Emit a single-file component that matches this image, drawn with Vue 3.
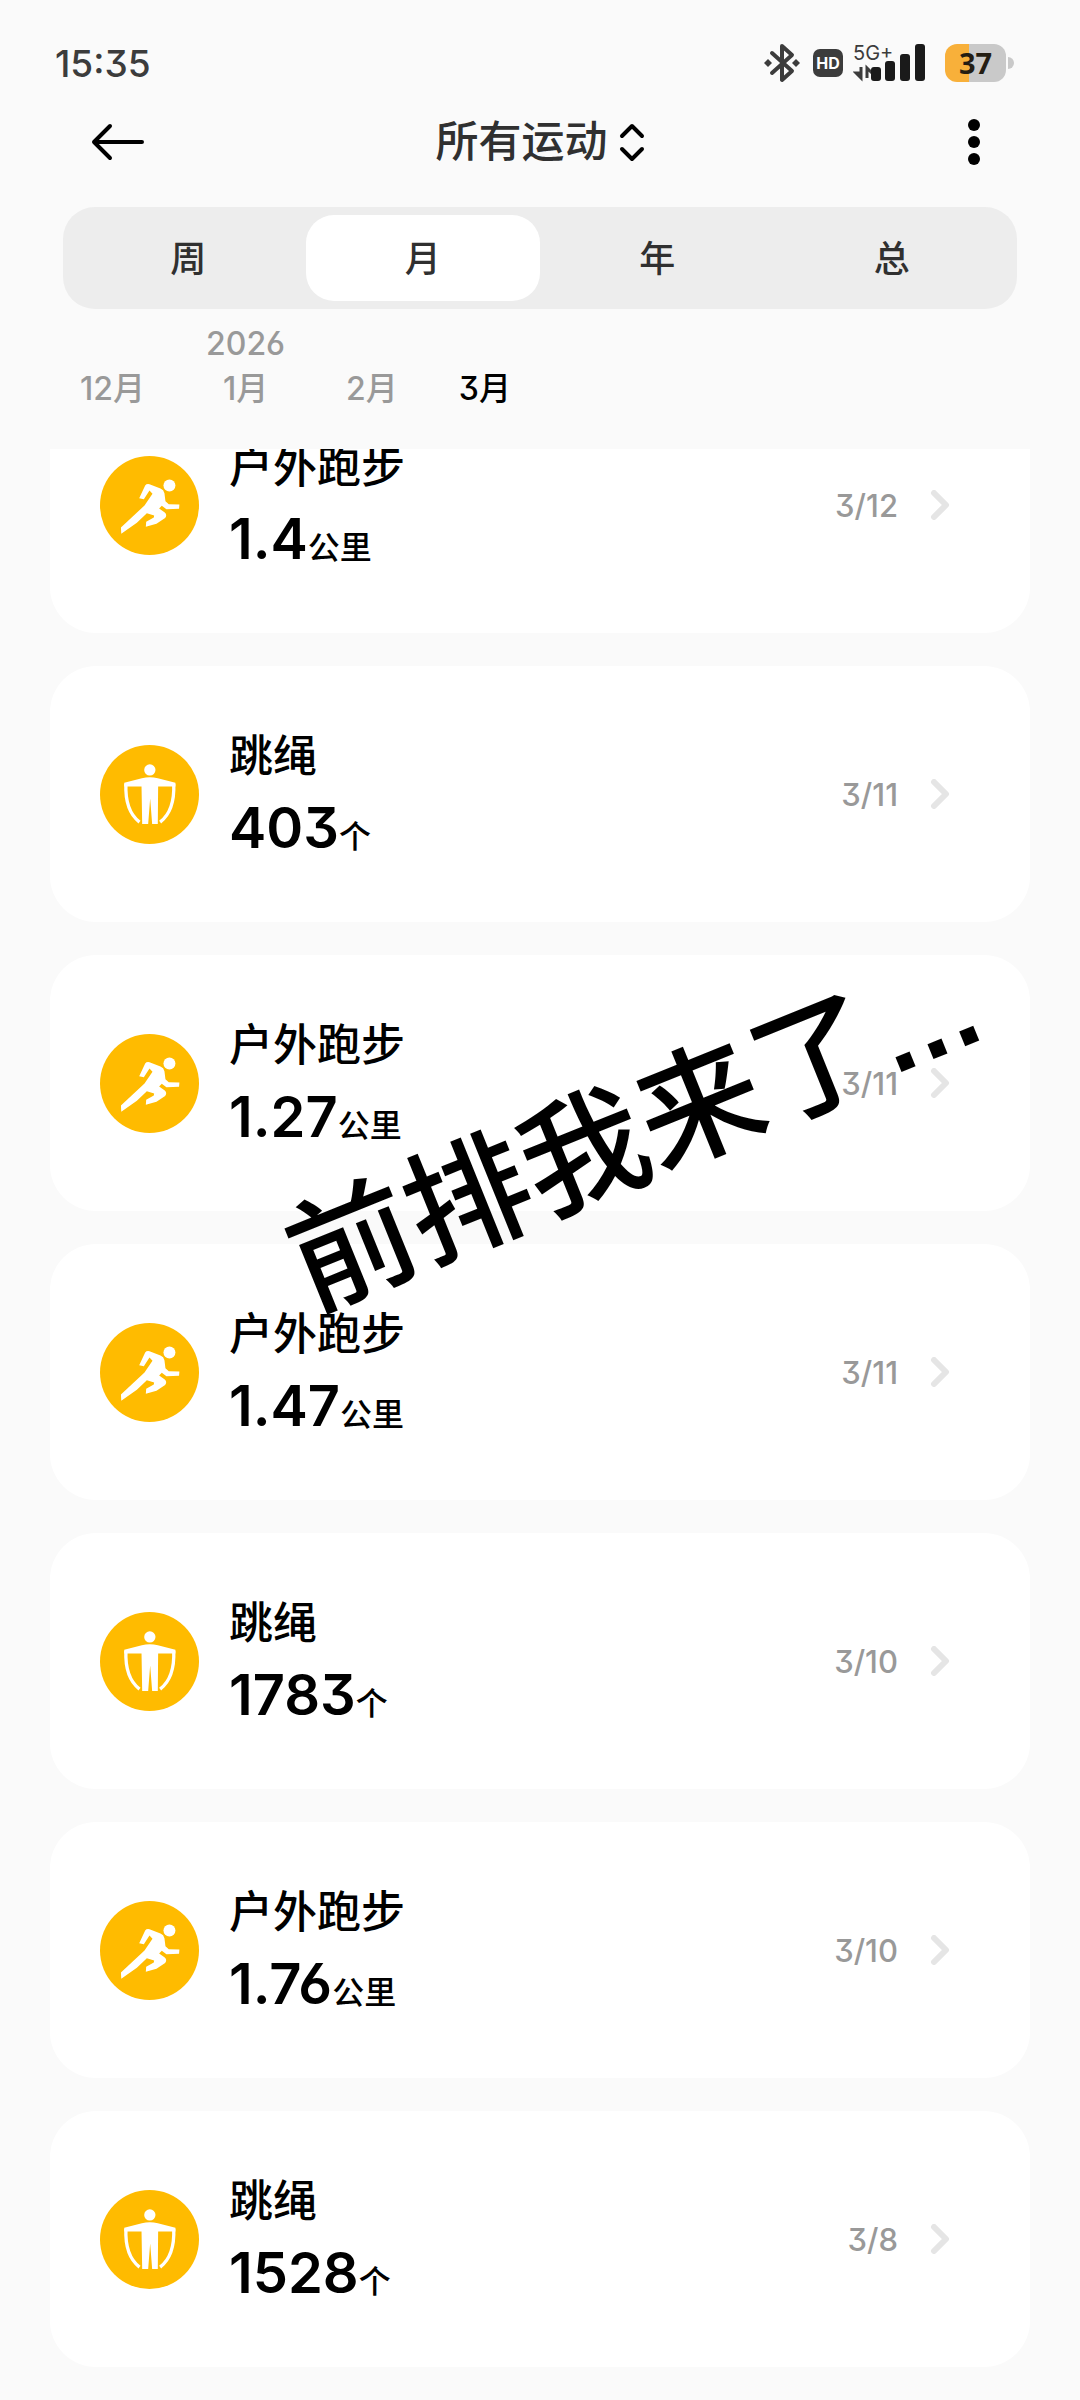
<script setup>
import { ref } from 'vue'

const ranges = ['周', '月', '年', '总']
const activeRange = ref('月')

const months = [
  { label: '12月', year: '' },
  { label: '1月', year: '2026' },
  { label: '2月', year: '' },
  { label: '3月', year: '' },
]
const activeMonth = ref('3月')

const records = [
  { id: 1, type: 'run', name: '户外跑步', value: '1.4', unit: '公里', date: '3/12' },
  { id: 2, type: 'rope', name: '跳绳', value: '403', unit: '个', date: '3/11' },
  { id: 3, type: 'run', name: '户外跑步', value: '1.27', unit: '公里', date: '3/11' },
  { id: 4, type: 'run', name: '户外跑步', value: '1.47', unit: '公里', date: '3/11' },
  { id: 5, type: 'rope', name: '跳绳', value: '1783', unit: '个', date: '3/10' },
  { id: 6, type: 'run', name: '户外跑步', value: '1.76', unit: '公里', date: '3/10' },
  { id: 7, type: 'rope', name: '跳绳', value: '1528', unit: '个', date: '3/8' },
]
</script>

<template>
  <div class="page">
    <div class="status">
      <time class="clock">15:35</time>
      <div class="indicators">
        <svg class="bluetooth" viewBox="0 0 36 40" aria-hidden="true">
          <path d="M8 10 L28 28 L18 37 V3 L28 12 L8 30" fill="none" stroke="#3c3c3c" stroke-width="4" stroke-linejoin="round" stroke-linecap="round" />
          <path d="M0 20 l4 -4 l4 4 l-4 4z M28 20 l4 -4 l4 4 l-4 4z" fill="#3c3c3c" />
        </svg>
        <span class="hd">HD</span>
        <div class="signal">
          <span class="network">5G+</span>
          <svg class="bars" viewBox="0 0 72 38" aria-hidden="true">
            <path d="M8 23 V34 L3 29 H8 M14 34 V24 L19 29" fill="none" stroke="#3c3c3c" stroke-width="3" />
            <g fill="#1a1a1a">
              <rect x="18" y="23" width="10" height="14" rx="3" />
              <rect x="32" y="17" width="10" height="20" rx="3" />
              <rect x="47" y="10" width="10" height="27" rx="3" />
              <rect x="62" y="0" width="10" height="37" rx="3" />
            </g>
          </svg>
        </div>
        <div class="battery"><span class="level">37</span></div>
      </div>
    </div>

    <header class="header">
      <button class="icon-button" type="button" aria-label="返回">
        <svg width="54" height="38" viewBox="0 0 54 38"><path d="M51 19 H3 M19 3 L3 19 L19 35" fill="none" stroke="#000" stroke-width="4" stroke-linecap="round" stroke-linejoin="round" /></svg>
      </button>
      <button class="title" type="button">
        <span class="title-text">所有运动</span>
        <svg width="26" height="40" viewBox="0 0 26 40"><path d="M3 14 L13 4 L23 14 M3 27 L13 37 L23 27" fill="none" stroke="#000" stroke-width="4" stroke-linecap="round" stroke-linejoin="round" /></svg>
      </button>
      <button class="icon-button more" type="button" aria-label="更多">
        <svg width="12" height="46" viewBox="0 0 12 46"><circle cx="6" cy="6" r="6" /><circle cx="6" cy="23" r="6" /><circle cx="6" cy="40" r="6" /></svg>
      </button>
    </header>

    <nav class="ranges">
      <button
        v-for="range in ranges"
        :key="range"
        type="button"
        class="range"
        :class="{ active: range === activeRange }"
        @click="activeRange = range"
      >{{ range }}</button>
    </nav>

    <nav class="months">
      <button
        v-for="month in months"
        :key="month.label"
        type="button"
        class="month"
        :class="{ active: month.label === activeMonth }"
        @click="activeMonth = month.label"
      >
        <span class="year">{{ month.year }}</span>
        <span>{{ month.label }}</span>
      </button>
    </nav>

    <main class="viewport">
      <ul class="records">
        <li v-for="record in records" :key="record.id">
          <a class="card" href="#">
            <svg v-if="record.type === 'run'" class="badge" viewBox="29 32 298 298" aria-hidden="true">
              <circle cx="178" cy="181" r="149" fill="#ffbb00" />
              <g fill="#fff">
                <circle cx="238" cy="121" r="18" />
                <path d="M147 159 L165 121 Q169 115 178 117 L211 130 Q221 134 223 144 L226 168 L236 177 L268 178 L267 191 L229 192 L215 182 L207 190 L224 202 Q232 209 225 219 L199 236 L167 245 L168 230 L191 217 L192 211 L170 204 L140 233 L93 266 L92 247 L163 181 L187 146 L178 136 L161 162 Z" />
              </g>
            </svg>
            <svg v-else class="badge" viewBox="29 29 298 298" aria-hidden="true">
              <circle cx="178" cy="178" r="149" fill="#ffbb00" />
              <g fill="#fff">
                <circle cx="179" cy="104" r="17" />
                <path d="M102 143 L155 129 Q179 123 203 129 L256 143 V154 H204 L203 267 H186 L180 190 L174 267 H156 L154 154 H102 Z" />
              </g>
              <path d="M107 146 C105 195 118 238 148 261 M251 146 C253 195 240 238 210 261" fill="none" stroke="#fff" stroke-width="10" />
            </svg>
            <div class="info">
              <span class="name">{{ record.name }}</span>
              <span class="amount"><strong>{{ record.value }}</strong><span class="unit">{{ record.unit }}</span></span>
            </div>
            <time class="date">{{ record.date }}</time>
            <svg class="chevron" viewBox="0 0 20 30" aria-hidden="true"><path d="M4 3 L16 15 L4 27" fill="none" stroke="#e5e5e5" stroke-width="6" stroke-linecap="round" stroke-linejoin="round" /></svg>
          </a>
        </li>
      </ul>
      <div class="caption">前排我来了<span class="dots">…</span></div>
    </main>
  </div>
</template>

<style>
body {
  margin: 0;
  background: #fafafa;
}
</style>

<style scoped>
.page {
  min-height: 100vh;
  background: #fafafa;
  color: #000;
  font-family: Inter, "Noto Sans CJK SC", sans-serif;
  font-feature-settings: "cv03", "cv09";
}

button {
  border: 0;
  padding: 0;
  background: none;
  color: inherit;
  font: inherit;
  font-feature-settings: inherit;
  cursor: pointer;
}

.status {
  display: flex;
  justify-content: space-between;
  align-items: center;
  height: 42px;
  padding: 42px 74px 0 55px;
}

.clock {
  color: #3c3c3c;
  font-size: 37px;
  font-weight: 500;
}

.indicators {
  display: flex;
  align-items: center;
}

.bluetooth {
  width: 36px;
  height: 40px;
  margin-right: 13px;
}

.hd {
  width: 30px;
  margin-right: 10px;
  border-radius: 7px;
  background: #3c3c3c;
  color: #fff;
  font-size: 16px;
  font-weight: 700;
  line-height: 28px;
  text-align: center;
}

.signal {
  position: relative;
  width: 72px;
  height: 38px;
  margin-right: 20px;
}

.network {
  position: absolute;
  top: 0;
  left: 0;
  color: #3c3c3c;
  font-size: 20px;
  line-height: 18px;
}

.bars {
  display: block;
  width: 72px;
  height: 38px;
}

.battery {
  position: relative;
  width: 61px;
  height: 38px;
  border-radius: 12px;
  background: linear-gradient(to right, #f8b03a 40%, #c9c9c9 40%);
  text-align: center;
}

.battery::after {
  position: absolute;
  top: 13px;
  right: -8px;
  width: 6px;
  height: 12px;
  border-radius: 0 6px 6px 0;
  background: #c9c9c9;
  content: "";
}

.level {
  color: #241d12;
  font-family: "Noto Sans", sans-serif;
  font-size: 29px;
  font-weight: 700;
  line-height: 38px;
}

.header {
  display: flex;
  justify-content: space-between;
  align-items: center;
  height: 116px;
  padding: 0 91px;
}

.icon-button {
  display: flex;
  width: 54px;
}

.more {
  justify-content: flex-end;
  padding-right: 9px;
  box-sizing: border-box;
}

.title {
  display: flex;
  align-items: center;
  gap: 11px;
  color: #303030;
  font-size: 43px;
  font-weight: 500;
  line-height: 60px;
}

.title-text {
  padding-bottom: 2px;
}

.ranges {
  display: flex;
  margin: 7px 63px 0;
  padding: 8px;
  border-radius: 32px;
  background: #ededed;
}

.range {
  flex: 1;
  height: 86px;
  padding-bottom: 4px;
  border-radius: 28px;
  color: #303030;
  font-size: 36px;
  font-weight: 500;
}

.range.active {
  background: #fff;
}

.months {
  display: flex;
  gap: 61px;
  padding: 12px 80px 38px;
}

.month {
  display: flex;
  flex-direction: column;
  align-items: center;
  color: #999;
  font-size: 32px;
  font-weight: 500;
  line-height: 45px;
}

.month.active {
  color: #000;
}

.year {
  height: 45px;
}

.viewport {
  position: relative;
  overflow: hidden;
  padding: 0 50px 33px;
}

.records {
  display: flex;
  flex-direction: column;
  gap: 33px;
  margin: -72px 0 0;
  padding: 0;
  list-style: none;
}

.card {
  display: flex;
  align-items: center;
  height: 256px;
  box-sizing: border-box;
  padding: 0 80px 0 50px;
  border-radius: 46px;
  background: #fff;
  color: inherit;
  text-decoration: none;
}

.badge {
  width: 99px;
  height: 99px;
}

.info {
  display: flex;
  flex: 1;
  flex-direction: column;
  margin-left: 30px;
  padding-top: 18px;
}

.name {
  font-size: 44px;
  font-weight: 500;
  line-height: 64px;
}

.amount {
  line-height: 80px;
}

.amount strong {
  font-size: 56px;
  font-weight: 600;
}

.unit {
  font-size: 32px;
  font-weight: 500;
}

.date {
  color: #999;
  font-size: 31px;
  font-weight: 500;
}

.chevron {
  width: 20px;
  height: 30px;
  margin-left: 32px;
}

.caption {
  position: absolute;
  top: 747px;
  left: 294px;
  font-family: "Noto Sans CJK SC", sans-serif;
  font-size: 125px;
  font-weight: 500;
  line-height: 128px;
  white-space: nowrap;
  transform: rotate(-22deg);
  transform-origin: 0 50%;
  pointer-events: none;
}

.dots {
  font-family: "Liberation Sans", sans-serif;
  font-size: 108px;
  font-weight: 700;
}
</style>
